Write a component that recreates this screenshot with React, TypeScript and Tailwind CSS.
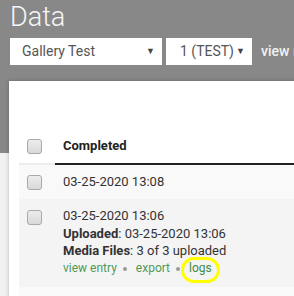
import React from "react";

const Checkbox = () => (
  <span className="mt-[2px] block h-[15px] w-[15px] rounded-[3px] border border-[#a9a9a9] bg-gradient-to-b from-[#ececec] to-[#d9d9d9]" />
);

const Dot = () => (
  <span className="ml-[6px] mr-[9px] inline-block h-[4px] w-[4px] rounded-full bg-[#9a9a9a] align-middle" />
);

export default function App() {
  return (
    <div
      className="h-[296px] w-[294px] overflow-hidden bg-[#f1f1f1]"
      style={{ fontFamily: "Roboto, 'Liberation Sans', sans-serif" }}
    >
      {/* Header */}
      <div className="bg-[#888888] pb-[88px] pl-[10px] pt-[1px]">
        <h1 className="text-[27px] font-light leading-[32px] text-[#f7f7f7]">
          Data
        </h1>
        <div className="mt-[5px] flex w-[400px] items-center gap-[4px] whitespace-nowrap">
          <div className="flex h-[27px] w-[152px] shrink-0 items-center justify-between bg-white pl-[12px] pr-[7px] text-[14px] text-[#555]">
            <span>Gallery Test</span>
            <span className="text-[9px] text-[#444]">▼</span>
          </div>
          <div className="flex h-[27px] w-[86px] shrink-0 items-center justify-between bg-white pl-[14px] pr-[7px] text-[14px] text-[#555]">
            <span>1 (TEST)</span>
            <span className="text-[9px] text-[#444]">▼</span>
          </div>
          <span className="ml-[5px] shrink-0 text-[14px] font-medium text-[#f2f2f2]">
            view records
          </span>
        </div>
      </div>

      {/* Card */}
      <div className="-mt-[72px] ml-[9px] w-[320px] bg-white pl-[10px] pt-[48px] shadow-[0_0_4px_rgba(0,0,0,0.25)]">
        <div className="text-[13px] leading-[18px] text-[#333]">
          {/* Header row */}
          <div className="flex">
            <div className="w-[36px] border-b-2 border-[#ececec] py-[8px] pl-[8px]">
              <Checkbox />
            </div>
            <div className="flex-1 border-b-2 border-[#222] py-[8px] pl-[8px] font-bold text-[#222]">
              Completed
            </div>
          </div>

          {/* Row 1 */}
          <div className="flex bg-[#f9f9f9]">
            <div className="w-[36px] py-[8px] pl-[8px]">
              <Checkbox />
            </div>
            <div className="flex-1 py-[8px] pl-[8px]">03-25-2020 13:08</div>
          </div>

          {/* Row 2 */}
          <div className="flex bg-[#f4f4f4]">
            <div className="w-[36px] pb-[8px] pl-[8px] pt-[9px]">
              <Checkbox />
            </div>
            <div className="flex-1 pb-[9px] pl-[8px] pt-[8px] leading-[17.7px]">
              <div>03-25-2020 13:06</div>
              <div>
                <b>Uploaded</b>: 03-25-2020 13:06
              </div>
              <div>
                <b>Media Files</b>: 3 of 3 uploaded
              </div>
              <div className="text-[12px] text-[#4f9a57]">
                <span>view entry</span>
                <Dot />
                <span>export</span>
                <Dot />
                <span className="relative text-[#3f8a4a]">
                  logs
                  <span className="absolute -left-[8px] -top-[4px] h-[26px] w-[39px] rounded-full border-[3px] border-[#ffff00]" />
                </span>
              </div>
            </div>
          </div>

          {/* Row 3 */}
          <div className="flex h-[30px] bg-[#f9f9f9]" />
        </div>
      </div>
    </div>
  );
}
